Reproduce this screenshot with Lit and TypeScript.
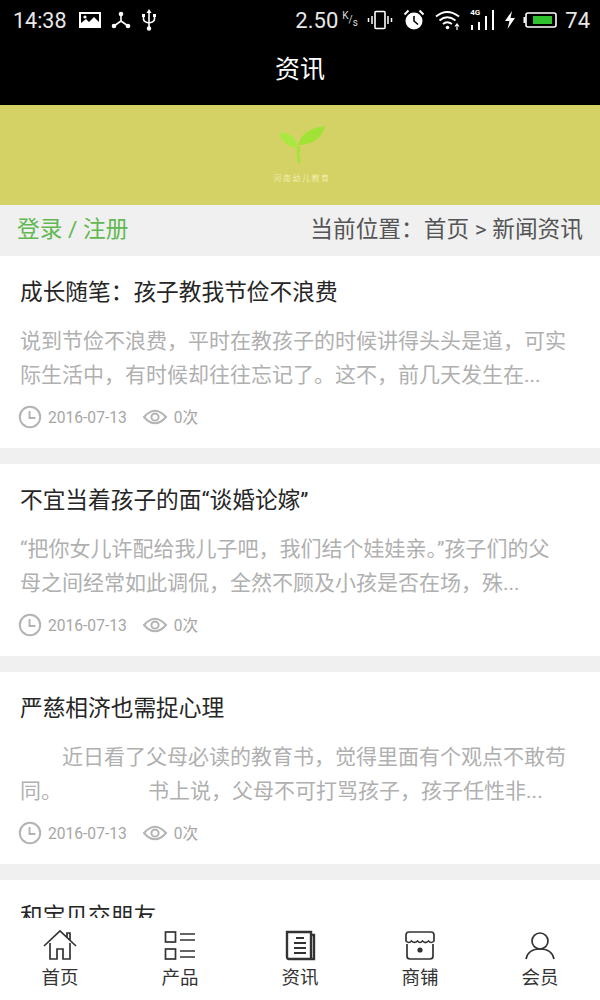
import { LitElement, css, html, svg } from 'lit';
import { customElement } from 'lit/decorators.js';

interface Article {
  title: string;
  lines: string[];
}

const articles: Article[] = [
  {
    title: '成长随笔：孩子教我节俭不浪费',
    lines: ['说到节俭不浪费，平时在教孩子的时候讲得头头是道，可实', '际生活中，有时候却往往忘记了。这不，前几天发生在...'],
  },
  {
    title: '不宜当着孩子的面“谈婚论嫁”',
    lines: ['“把你女儿许配给我儿子吧，我们结个娃娃亲。”孩子们的父', '母之间经常如此调侃，全然不顾及小孩是否在场，殊...'],
  },
  {
    title: '严慈相济也需捉心理',
    lines: ['　　近日看了父母必读的教育书，觉得里面有个观点不敢苟', '同。　　　　  \u200a书上说，父母不可打骂孩子，孩子任性非...'],
  },
  { title: '和宝贝交朋友', lines: [] },
];

const navIcons = [
  svg`<path d="M2 18 L18 3 L34 18 M8 15 V31 H15 V21 H21 V31 H28 V15 M25 9 V5 H28 V12" />`,
  svg`<rect x="3.5" y="4" width="10" height="10" /><rect x="3.5" y="21" width="10" height="10" /><path d="M18 6 H33 M18 12 H33 M18 23 H33 M18 29 H33" />`,
  svg`<path d="M5 4 H29 V31 H7 Q5 31 5 29 Z M29 7 H32 V31 H29" stroke-width="2.4" /><path d="M14 10 H22 M12 15 H24 M12 20 H24 M12 25 H24" stroke-width="2.2" />`,
  svg`<path d="M7 4 H29 Q32 4 32 7 V13 Q29 16 26.5 13 Q23.5 16 20.5 13 Q18 16 15.5 13 Q12.5 16 9.5 13 Q7 16 4 13 V7 Q4 4 7 4 Z M5 16 V28 Q5 31 8 31 H28 Q31 31 31 28 V16" /><circle cx="18" cy="22" r="2.6" fill="currentColor" stroke="none" />`,
  svg`<circle cx="18" cy="13" r="8" /><path d="M4 31 Q6 21 18 21 Q30 21 32 31" />`,
];

const navLabels = ['首页', '产品', '资讯', '商铺', '会员'];

@customElement('app-root')
export class AppRoot extends LitElement {
  private renderMeta() {
    return html`
      <div class="meta">
        <svg class="clock" viewBox="0 0 24 24" width="24" height="24">
          <circle cx="12" cy="12" r="10.2" />
          <path d="M11.5 6 V13 H17.5" />
        </svg>
        <span class="date">2016-07-13</span>
        <svg class="eye" viewBox="0 0 24 18" width="24" height="18">
          <path d="M1 9 Q12 -3.5 23 9 Q12 21.5 1 9 Z" />
          <circle cx="12" cy="9" r="3.6" />
        </svg>
        <span>0次</span>
      </div>
    `;
  }

  private renderStatus() {
    return html`
      <div class="status">
        <span class="time">14:38</span>
        <svg class="s-pic" viewBox="0 0 22 16" width="22" height="16">
          <path fill-rule="evenodd" d="M0 0 H22 V16 H0 Z M2 2 V11 L7 7 L10 10 L15 5 L20 10 V2 Z" fill="#fff" />
          <circle cx="6" cy="5" r="1.6" fill="#fff" />
        </svg>
        <svg class="s-net" viewBox="0 0 20 20" width="20" height="20">
          <path d="M10 4 V11 L3 16 M10 11 L17 16" stroke="#fff" stroke-width="1.6" fill="none" />
          <circle cx="10" cy="4" r="2.3" fill="#fff" /><circle cx="3" cy="16" r="2.3" fill="#fff" /><circle cx="17" cy="16" r="2.3" fill="#fff" />
        </svg>
        <svg class="s-usb" viewBox="0 0 16 22" width="16" height="22">
          <path d="M8 3 V19 M2.5 7 V10 Q2.5 13 8 14 Q13.5 13 13.5 10 V7" stroke="#fff" stroke-width="1.6" fill="none" />
          <path d="M8 0 L10.5 4 H5.5 Z M1 5 H4 V8 H1 Z M12 5 H15 V8 H12 Z" fill="#fff" />
          <circle cx="8" cy="19.5" r="2.2" fill="#fff" />
        </svg>
        <span class="spacer"></span>
        <span class="speed">2.50</span>
        <span class="unit"><sup>K</sup>/<sub>s</sub></span>
        <svg class="s-vib" viewBox="0 0 26 20" width="26" height="20">
          <rect x="8" y="1.5" width="10" height="17" rx="1" stroke="#fff" stroke-width="1.6" fill="none" />
          <path d="M5 6 V14 M1.5 8 V12 M21 6 V14 M24.5 8 V12" stroke="#fff" stroke-width="1.5" />
        </svg>
        <svg class="s-alarm" viewBox="0 0 22 22" width="22" height="22">
          <circle cx="11" cy="12" r="8.5" fill="#fff" />
          <path d="M11 7 V12 L15 15.5" stroke="#000" stroke-width="1.6" fill="none" />
          <path d="M1.5 5.5 L5.5 1.5 M20.5 5.5 L16.5 1.5" stroke="#fff" stroke-width="2" />
        </svg>
        <svg class="s-wifi" viewBox="0 0 26 20" width="26" height="20">
          <path d="M1 6.5 Q12 -2.5 24 6.5 M4.5 10.5 Q12 4 20.5 10.5 M8 14 Q12 10.5 17 14" stroke="#fff" stroke-width="1.8" fill="none" />
          <circle cx="12.5" cy="17.5" r="1.8" fill="#fff" />
          <path d="M22 20 V15 M20 16.5 L22 14 L24 16.5" stroke="#fff" stroke-width="1.2" fill="none" />
        </svg>
        <span class="signal">
          <span class="g4">4G</span>
          <svg viewBox="0 0 26 20" width="26" height="20">
            <path d="M2 20 V15 M9 20 V12 M16 20 V6 M23 20 V0" stroke="#fff" stroke-width="2" />
          </svg>
        </span>
        <svg class="s-bolt" viewBox="0 0 12 18" width="12" height="18">
          <path d="M8 0 L1 10 H5.5 L3.5 18 L11 7 H6.5 Z" fill="#fff" />
        </svg>
        <svg class="s-batt" viewBox="0 0 34 16" width="34" height="16">
          <rect x="3" y="1" width="30" height="14" rx="2" stroke="#fff" stroke-width="1.6" fill="none" />
          <rect x="0.5" y="5" width="2" height="6" fill="#fff" />
          <rect x="10" y="4" width="19" height="8" fill="#2fc22f" />
        </svg>
        <span class="level">74</span>
      </div>
    `;
  }

  render() {
    return html`
      <div class="page">
        <header>
          ${this.renderStatus()}
          <h1>资讯</h1>
        </header>
        <div class="banner">
          <svg viewBox="0 0 48 40" width="48" height="40">
            <path d="M20.5 21 Q19.5 30 21.5 38" stroke="#a6e23c" stroke-width="3" fill="none" />
            <path d="M20 23 Q6 22 1 8 Q16 6 20 23 Z" fill="#a9e840" />
            <path d="M20 20 Q24 4 47 1 Q42 20 20 20 Z" fill="#a0e236" />
          </svg>
          <span class="brand">河南幼儿教育</span>
        </div>
        <div class="crumb">
          <span class="login">登录 / 注册</span>
          <span class="where">当前位置：首页 > 新闻资讯</span>
        </div>
        <main>
          ${articles.map(
            (a) => html`
              <article>
                <h2>${a.title}</h2>
                ${a.lines.map((l) => html`<p>${l}</p>`)}
                ${a.lines.length ? this.renderMeta() : ''}
              </article>
            `
          )}
        </main>
        <nav>
          ${navLabels.map(
            (label, i) => html`
              <div class="tab">
                <svg viewBox="0 0 36 34" width="36" height="34">${navIcons[i]}</svg>
                <span>${label}</span>
              </div>
            `
          )}
        </nav>
      </div>
    `;
  }

  static styles = css`
    :host {
      display: block;
      font-family: Roboto, 'Noto Sans CJK SC', sans-serif;
    }

    .page {
      display: flex;
      flex-direction: column;
      height: 1000px;
      overflow: hidden;
      background: #fff;
    }

    header {
      flex: none;
      height: 105px;
      background: #000;
      color: #fff;
    }

    .status {
      display: flex;
      align-items: center;
      height: 40px;
      padding: 0 10px 0 13px;
    }

    .time {
      font-size: 21.5px;
      color: #e8e8e8;
      margin-right: 12px;
    }

    .s-net {
      margin-left: 10px;
    }

    .s-usb {
      margin-left: 10px;
    }

    .spacer {
      flex: 1;
    }

    .speed {
      font-size: 22px;
      color: #e8e8e8;
    }

    .unit {
      width: 20px;
      margin-left: 4px;
      font-size: 10px;
      line-height: 1;
      color: #ddd;
    }

    .unit sup,
    .unit sub {
      font-size: 10px;
      line-height: 0;
    }

    .s-vib {
      margin-left: 5px;
    }

    .s-alarm {
      margin-left: 10px;
    }

    .s-wifi {
      margin-left: 10px;
    }

    .signal {
      position: relative;
      display: flex;
      margin-left: 9px;
    }

    .g4 {
      position: absolute;
      left: 0;
      top: -2px;
      font-size: 8px;
      font-weight: 700;
    }

    .s-bolt {
      margin-left: 8px;
    }

    .s-batt {
      margin-left: 7px;
    }

    .level {
      margin-left: 8px;
      font-size: 22px;
      color: #e8e8e8;
    }

    h1 {
      margin: 0;
      height: 60px;
      font-size: 25px;
      font-weight: 400;
      line-height: 60px;
      text-align: center;
    }

    .banner {
      flex: none;
      display: flex;
      flex-direction: column;
      align-items: center;
      height: 100px;
      padding-top: 20px;
      box-sizing: border-box;
      background: #d4d264;
    }

    .banner svg {
      margin-left: 4px;
    }

    .brand {
      margin: 8px 0 0 4px;
      font-size: 8px;
      line-height: 12px;
      letter-spacing: 1.5px;
      color: #f0eeb0;
    }

    .crumb {
      flex: none;
      display: flex;
      align-items: center;
      justify-content: space-between;
      height: 51px;
      padding: 0 17px 6px;
      box-sizing: border-box;
      background: #f0f0f0;
      font-size: 22.7px;
    }

    .login {
      color: #62b852;
    }

    .where {
      color: #555;
    }

    main {
      flex: 1;
      min-height: 0;
      overflow: hidden;
      background: #f0f0f0;
    }

    article {
      height: 192px;
      margin-bottom: 16px;
      padding: 21px 20px 0;
      box-sizing: border-box;
      background: #fff;
    }

    h2 {
      margin: 0 0 15px;
      font-size: 22.7px;
      font-weight: 400;
      line-height: 32px;
      color: #262626;
    }

    p {
      margin: 0;
      height: 34px;
      font-size: 21px;
      line-height: 34px;
      white-space: pre;
      color: #b0b0b0;
    }

    .meta {
      display: flex;
      align-items: center;
      height: 24px;
      margin: 13px 0 0 -2px;
      font-size: 15.6px;
      line-height: 24px;
      color: #a6a6a6;
    }

    .meta span {
      padding-top: 2px;
    }

    .meta svg {
      flex: none;
      fill: none;
      stroke: #b4b4b4;
      stroke-width: 2;
    }

    .date {
      margin: 0 16px 0 6px;
    }

    .eye {
      margin-right: 7px;
    }

    nav {
      flex: none;
      display: grid;
      grid-template-columns: repeat(5, 1fr);
      height: 82px;
      background: #fff;
    }

    .tab {
      display: flex;
      flex-direction: column;
      align-items: center;
      padding-top: 10px;
      font-size: 18.5px;
      line-height: 26px;
      color: #333;
    }

    .tab svg {
      fill: none;
      stroke: currentColor;
      stroke-width: 1.7;
      margin-bottom: 3px;
    }
  `;
}

declare global {
  interface HTMLElementTagNameMap {
    'app-root': AppRoot;
  }
}
